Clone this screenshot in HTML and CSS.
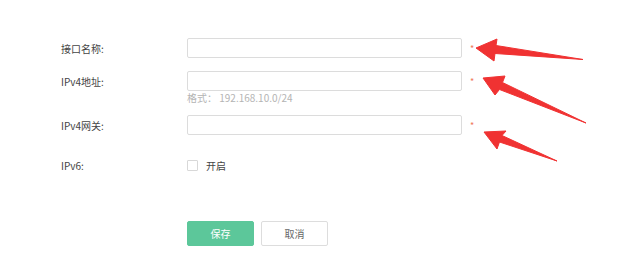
FILE: index.html
```html
<!DOCTYPE html>
<html lang="zh">
<head>
<meta charset="utf-8">
<title>接口设置</title>
<link rel="stylesheet" href="styles.css">
</head>
<body>
<div class="page">
  <form class="form">
    <div class="row row-name">
      <label class="label">接口名称:</label>
      <input class="field" type="text">
      <span class="req">*</span>
    </div>
    <div class="row row-ip">
      <label class="label">IPv4地址:</label>
      <input class="field" type="text">
      <span class="req">*</span>
    </div>
    <div class="hint">格式： 192.168.10.0/24</div>
    <div class="row row-gw">
      <label class="label">IPv4网关:</label>
      <input class="field" type="text">
      <span class="req">*</span>
    </div>
    <div class="row row-v6">
      <label class="label">IPv6:</label>
      <span class="check"></span>
      <span class="check-text">开启</span>
    </div>
    <div class="actions">
      <button type="button" class="btn btn-primary">保存</button>
      <button type="button" class="btn btn-default">取消</button>
    </div>
  </form>
  <svg class="arrows" width="640" height="270" viewBox="0 0 640 270">
    <polygon points="476,48 497,39 496,45.5 583,59.5 495,53.5 494,61" />
    <polygon points="483,78 505,76 502.5,82.5 586,123 499.5,89.5 495,95" />
    <polygon points="484,132 506,131 502,135.5 557,161 499.5,142 497,149" />
  </svg>
</div>
</body>
</html>
```
FILE: styles.css
```css
html, body {
  margin: 0;
  padding: 0;
  background: #ffffff;
}
body {
  font-family: "Noto Sans CJK SC", "Microsoft YaHei", "Liberation Sans", sans-serif;
  font-size: 10px;
  color: #333333;
}
.page {
  position: relative;
  width: 640px;
  height: 270px;
  overflow: hidden;
}
.form {
  display: flex;
  flex-direction: column;
  padding: 38px 0 0 61px;
}
.row {
  display: flex;
  align-items: center;
  height: 20px;
}
.label {
  width: 126px;
  flex: none;
  color: #444444;
  font-size: 10px;
}
.field {
  box-sizing: border-box;
  width: 275px;
  height: 20px;
  margin: 0;
  padding: 0 6px;
  border: 1px solid #dcdcdc;
  border-radius: 2px;
  background: #fff;
  outline: none;
}
.req {
  margin-left: 8px;
  color: #f07a5a;
  font-size: 9px;
  line-height: 1;
  position: relative;
  top: 0;
}
.row-ip {
  margin-top: 13px;
}
.hint {
  margin-left: 126px;
  height: 14px;
  line-height: 14px;
  margin-top: 0;
  color: #b4b4b4;
  font-size: 10px;
}
.row-gw {
  margin-top: 10px;
}
.row-v6 {
  margin-top: 20px;
}
.check {
  box-sizing: border-box;
  width: 11px;
  height: 11px;
  border: 1px solid #d8d8d8;
  border-radius: 1px;
  background: #fff;
}
.check-text {
  margin-left: 8px;
  color: #444;
}
.actions {
  display: flex;
  gap: 7px;
  margin-top: 46px;
  margin-left: 126px;
}
.btn {
  box-sizing: border-box;
  width: 67px;
  height: 25px;
  border-radius: 2px;
  font-family: inherit;
  font-size: 10px;
  padding: 0;
  margin: 0;
  cursor: pointer;
}
.btn-primary {
  background: #5cc79a;
  border: 1px solid #5cc79a;
  color: #ffffff;
}
.btn-default {
  background: #ffffff;
  border: 1px solid #dddddd;
  color: #666666;
}
.arrows {
  position: absolute;
  left: 0;
  top: 0;
  pointer-events: none;
}
.arrows polygon {
  fill: #f03232;
  stroke: #f03232;
  stroke-width: 1;
  stroke-linejoin: round;
}
```
